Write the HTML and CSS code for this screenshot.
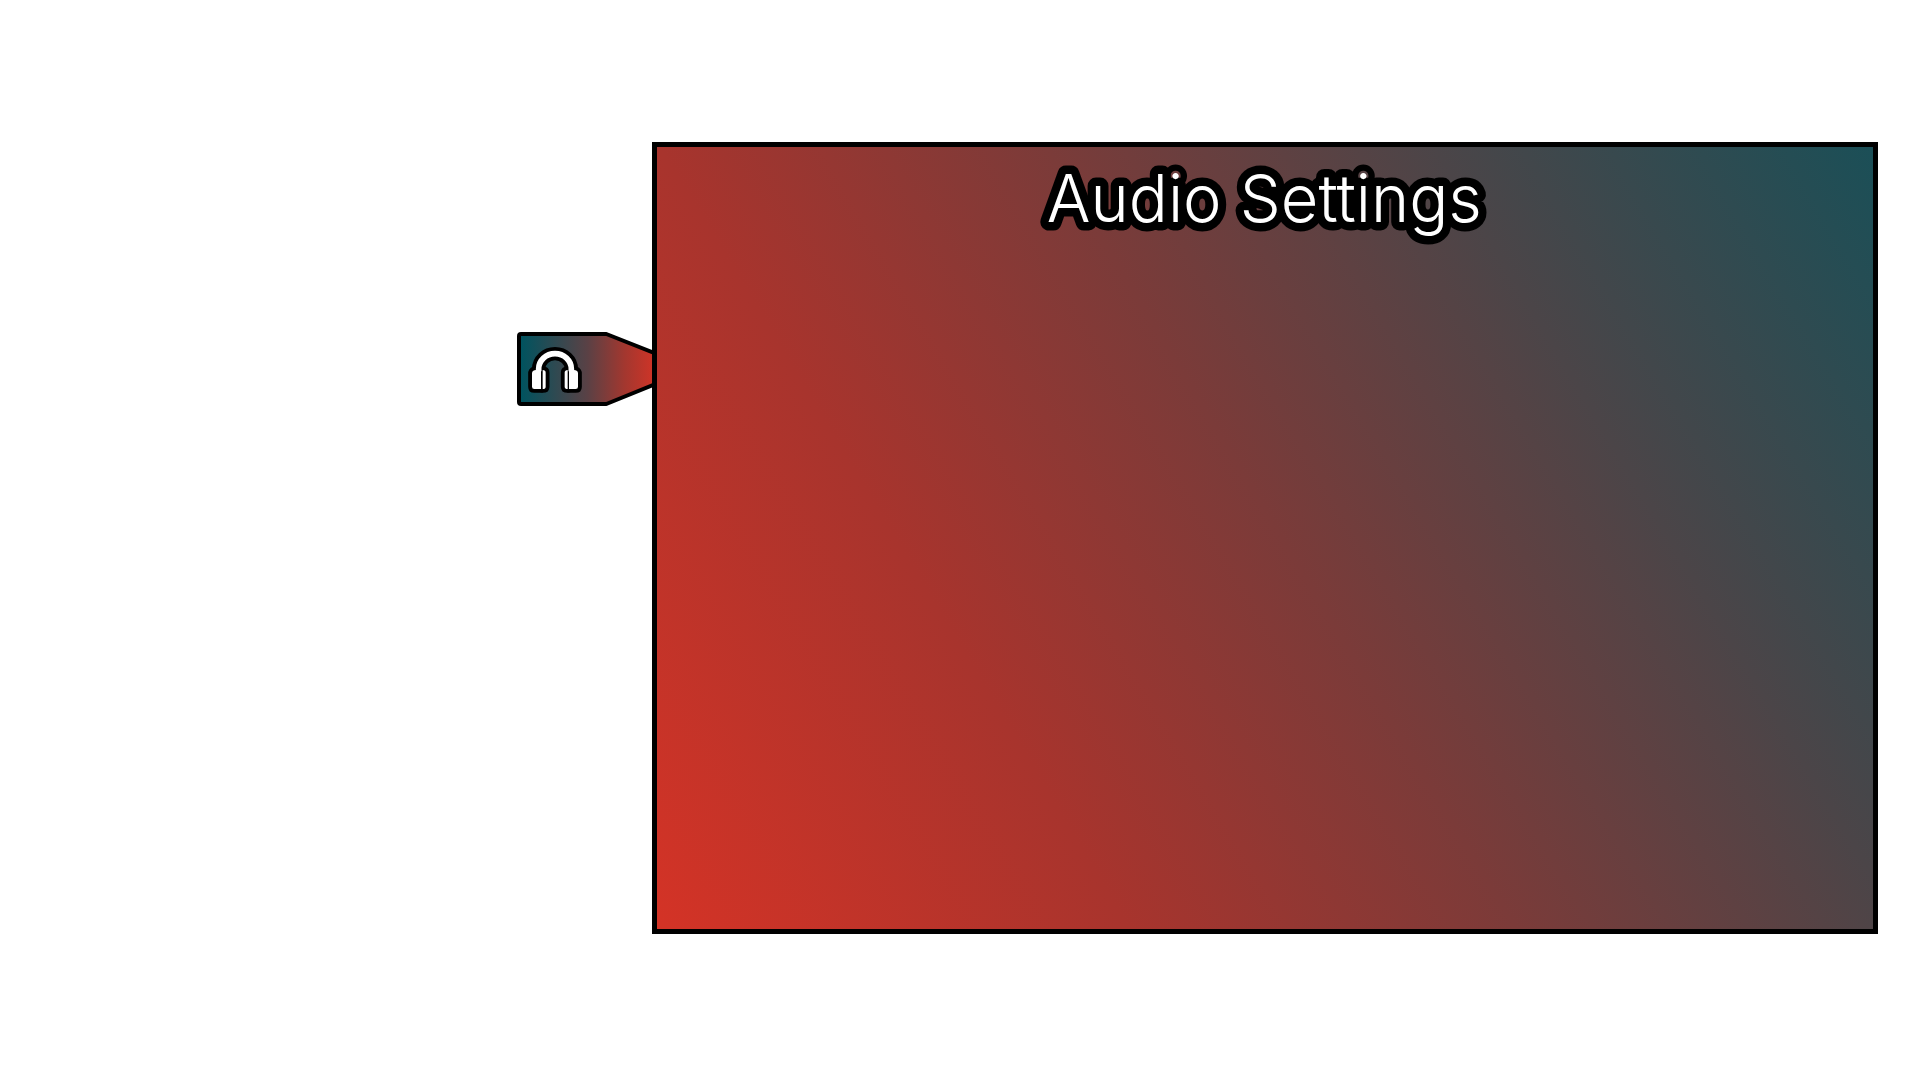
FILE: index.html
```html
<!DOCTYPE html>
<html lang="en">
<head>
<meta charset="utf-8">
<title>Audio Settings</title>
<link rel="stylesheet" href="styles.css">
</head>
<body>
<main class="settings">
  <button class="tab" aria-label="Audio">
    <svg class="tab-art" viewBox="0 0 411 222">
      <defs>
        <linearGradient id="tab-fill" gradientUnits="userSpaceOnUse" x1="12" y1="0" x2="411" y2="0">
          <stop offset="0" stop-color="#00535f"/>
          <stop offset="0.5" stop-color="#5a4145"/>
          <stop offset="0.78" stop-color="#a3372f"/>
          <stop offset="1" stop-color="#cf3427"/>
        </linearGradient>
      </defs>
      <path class="tab-shape" fill="url(#tab-fill)" d="M12 6H268L420 66V154L268 216H12Q6 216 6 210V12Q6 6 12 6Z"/>
      <g class="outline">
        <path class="band-outline" d="M65 118V111a49 46 0 0 1 98 0V118"/>
        <path d="M45 122q2-8 12-8h15v57H52q-7 0-7-7Z"/>
        <path d="M77 114q9 0 9 8v42q0 7-9 7Z"/>
        <path d="M183 122q-2-8-12-8h-15v57h20q7 0 7-7Z"/>
        <path d="M152 114q-9 0-9 8v42q0 7 9 7Z"/>
      </g>
      <g class="phones">
        <path class="band" d="M65 118V111a49 46 0 0 1 98 0V118"/>
        <path d="M45 122q2-8 12-8h15v57H52q-7 0-7-7Z"/>
        <path d="M77 114q9 0 9 8v42q0 7-9 7Z"/>
        <path d="M183 122q-2-8-12-8h-15v57h20q7 0 7-7Z"/>
        <path d="M152 114q-9 0-9 8v42q0 7 9 7Z"/>
      </g>
    </svg>
  </button>
  <section class="panel">
    <svg class="title" viewBox="0 0 460 104">
      <text class="title-text" x="11.8" y="75.4" textLength="435" lengthAdjust="spacingAndGlyphs">Audio Settings</text>
    </svg>
  </section>
</main>
</body>
</html>
```
FILE: styles.css
```css
* { box-sizing: border-box; }
body { margin: 0; background: #fff; }
.settings {
  display: flex;
  align-items: flex-start;
  width: 1920px;
  height: 1080px;
  padding: 142px 42px 0 517px;
  overflow: hidden;
}
.tab {
  flex: none;
  width: 135px;
  height: 74px;
  margin: 190px 0 0;
  padding: 0;
  border: 0;
  background: none;
}
.tab-art { display: block; width: 137px; height: 74px; }
.tab-shape { stroke: #000; stroke-width: 12; stroke-linejoin: round; }
.outline { fill: #000; stroke: #000; stroke-width: 23; stroke-linejoin: round; }
.outline .band-outline { fill: none; stroke-width: 40; }
.phones { fill: #fff; }
.band { fill: none; stroke: #fff; stroke-width: 17; }
.panel {
  position: relative;
  display: flex;
  justify-content: center;
  align-items: flex-start;
  flex: none;
  width: 1226px;
  height: 792px;
  border: 5px solid #000;
  background: linear-gradient(59deg, #d43326, #a8342d 28%, #7b3b39 51%, #4b4548 74%, #1b4f57) padding-box;
}
.title {
  width: 460px;
  height: 104px;
}
.title-text {
  font: 320 66.5px Inter, "Liberation Sans", sans-serif;
  fill: #fff;
  stroke: #000;
  stroke-width: 17px;
  stroke-linejoin: round;
  paint-order: stroke fill;
}
```
